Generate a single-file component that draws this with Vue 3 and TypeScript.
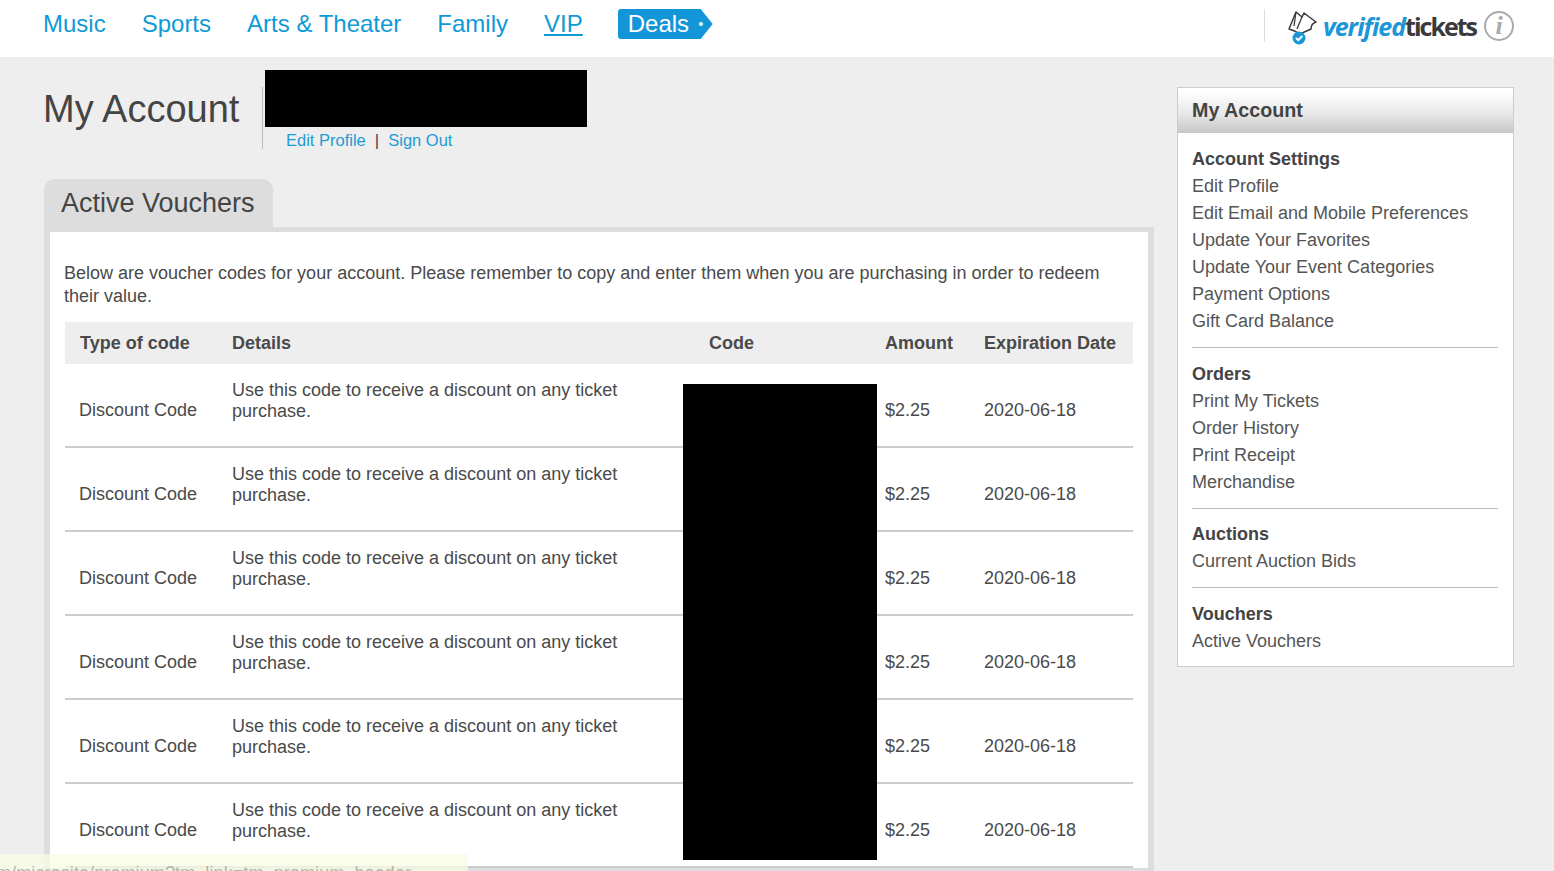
<script setup lang="ts">
const navItems = ['Music', 'Sports', 'Arts & Theater', 'Family']
const rows = Array.from({ length: 6 }, (_, i) => i)
const sections = [
  { title: 'Account Settings', links: ['Edit Profile', 'Edit Email and Mobile Preferences', 'Update Your Favorites', 'Update Your Event Categories', 'Payment Options', 'Gift Card Balance'] },
  { title: 'Orders', links: ['Print My Tickets', 'Order History', 'Print Receipt', 'Merchandise'] },
  { title: 'Auctions', links: ['Current Auction Bids'] },
  { title: 'Vouchers', links: ['Active Vouchers'] },
]
</script>

<template>
  <div class="page">
    <header class="topbar">
      <nav class="nav">
        <a v-for="item in navItems" :key="item" class="nav-link">{{ item }}</a>
        <a class="nav-link vip">VIP</a>
        <a class="deals">Deals<span class="deals-dot"></span></a>
      </nav>
      <div class="brand">
        <svg class="ticket" width="30" height="36" viewBox="0 0 30 36" fill="none">
          <path d="M2 19 L9 2 L15 7 L17 3 L29 12 C26 13 24 15 24 19 L13 24 C10 22 6 20 2 19 Z" stroke="#3a3a3a" stroke-width="1.5" stroke-linejoin="round" />
          <path d="M15 7 L10 19 M9 2 L7 16" stroke="#3a3a3a" stroke-width="1.3" />
          <circle cx="12" cy="28" r="6.5" fill="#1b96d6" />
          <path d="M9 28 L11.3 30.2 L15.3 26" stroke="#fff" stroke-width="1.9" />
        </svg>
        <span class="wordmark"><span class="verified">verified</span><span class="tickets">tickets</span></span>
        <span class="info">i</span>
      </div>
    </header>

    <main class="main">
      <section class="content">
        <div class="title-row">
          <h1 class="title">My Account</h1>
          <div class="user">
            <div class="user-redacted"></div>
            <div class="user-links">
              <a class="link">Edit Profile</a><span class="pipe">|</span><a class="link">Sign Out</a>
            </div>
          </div>
        </div>

        <h2 class="tab">Active Vouchers</h2>
        <div class="panel">
          <p class="intro">Below are voucher codes for your account. Please remember to copy and enter them when you are purchasing in order to redeem their value.</p>
          <div class="table">
            <div class="row head">
              <div class="cell first">Type of code</div>
              <div class="cell">Details</div>
              <div class="cell">Code</div>
              <div class="cell">Amount</div>
              <div class="cell">Expiration Date</div>
            </div>
            <div v-for="r in rows" :key="r" class="row body">
              <div class="cell">Discount Code</div>
              <div class="cell details">Use this code to receive a discount on any ticket purchase.</div>
              <div class="cell"></div>
              <div class="cell">$2.25</div>
              <div class="cell">2020-06-18</div>
            </div>
            <div class="code-redacted"></div>
          </div>
        </div>
      </section>

      <aside class="side">
        <h3 class="side-head">My Account</h3>
        <div class="side-body">
          <div v-for="s in sections" :key="s.title" class="side-section">
            <div class="side-title">{{ s.title }}</div>
            <a v-for="l in s.links" :key="l" class="side-link">{{ l }}</a>
          </div>
        </div>
      </aside>
    </main>

    <div class="status">m/microsite/premium?tm_link=tm_premium_header</div>
  </div>
</template>

<style>
html, body { margin: 0; background: #eee; }
</style>

<style scoped>
.page {
  position: relative;
  height: 871px;
  overflow: hidden;
  background: #eee;
  font-family: "Liberation Sans", Arial, sans-serif;
  color: #4a4a4a;
}
.topbar {
  height: 57px;
  background: #fff;
  display: flex;
  justify-content: space-between;
  padding: 0 40px 0 43px;
  box-sizing: border-box;
}
.nav {
  display: flex;
  align-items: flex-start;
  gap: 36px;
  padding-top: 9px;
}
.nav-link {
  font-size: 24px;
  line-height: 29px;
  color: #0f9ad6;
}
.vip { text-decoration: underline; }
.deals {
  position: relative;
  display: flex;
  align-items: center;
  height: 30px;
  width: 95px;
  margin-left: -1px;
  box-sizing: border-box;
  padding: 0 0 1px 10px;
  font-size: 24px;
  color: #fff;
  background: #1296d8;
  border-radius: 3px 0 0 3px;
  clip-path: polygon(0 0, 83px 0, 95px 50%, 83px 100%, 0 100%);
}
.deals-dot {
  position: absolute;
  left: 81px;
  top: 13px;
  width: 4px;
  height: 4px;
  border-radius: 50%;
  background: #fff;
}
.brand {
  display: flex;
  align-items: center;
  height: 33px;
  margin-top: 9px;
  border-left: 1px solid #ddd;
  padding-left: 22px;
}
.ticket { margin-top: 4px; flex: none; }
.wordmark {
  margin-left: 6px;
  font-family: "Open Sans", sans-serif;
  font-size: 25px;
  font-weight: 700;
  white-space: nowrap;
}
.verified { color: #1b96d6; font-style: italic; letter-spacing: -1px; }
.tickets { color: #3a3a3a; letter-spacing: -2px; }
.info {
  margin-left: 8px;
  width: 30px;
  height: 30px;
  box-sizing: border-box;
  border: 2px solid #aaa;
  border-radius: 50%;
  display: flex;
  align-items: center;
  justify-content: center;
  font-family: "Liberation Serif", serif;
  font-style: italic;
  font-weight: 700;
  font-size: 26px;
  color: #aaa;
}
.main {
  display: flex;
  align-items: flex-start;
  gap: 23px;
  padding-left: 44px;
}
.content { width: 1110px; flex: none; }
.title-row {
  display: flex;
  align-items: flex-start;
  height: 122px;
}
.title {
  margin: 30px 0 0 -1px;
  width: 219px;
  flex: none;
  font-size: 38px;
  line-height: 44px;
  font-weight: 400;
  color: #444;
}
.user {
  margin-top: 13px;
  position: relative;
  padding-left: 24px;
}
.user::before {
  content: "";
  position: absolute;
  left: 0;
  top: 17px;
  width: 1px;
  height: 62px;
  background: #bbb;
}
.user-redacted {
  width: 322px;
  height: 57px;
  margin-left: -21px;
  background: #000;
}
.user-links {
  display: flex;
  align-items: center;
  height: 27px;
  font-size: 16.5px;
}
.link { color: #1d9cd3; }
.pipe { margin: 0 9px; color: #444; font-size: 17px; }
.tab {
  margin: 0;
  width: 229px;
  height: 48px;
  box-sizing: border-box;
  padding-left: 17px;
  background: #ddd;
  border-radius: 11px 11px 0 0;
  font-size: 27px;
  line-height: 48px;
  font-weight: 400;
  color: #444;
}
.panel {
  border: 6px solid #ddd;
  border-top-width: 5px;
  background: #fff;
  padding: 30px 15px 0 14px;
}
.intro {
  margin: 0 0 14px;
  font-size: 18px;
  line-height: 23px;
}
.table {
  position: relative;
  margin-left: 1px;
  width: 1068px;
}
.row {
  display: grid;
  grid-template-columns: 153px 477px 176px 99px 163px;
  font-size: 18px;
}
.head {
  height: 42px;
  background: #eee;
  font-weight: 700;
  align-items: center;
}
.head .cell:first-child { padding-left: 15px; }
.body {
  height: 84px;
  box-sizing: border-box;
  border-bottom: 2px solid #ccc;
  align-items: start;
  line-height: 21px;
}
.cell { padding: 0 14px; }
.body .cell { padding-top: 36px; }
.body .details { padding: 16px 0 0 14px; width: 400px; }
.code-redacted {
  position: absolute;
  left: 618px;
  top: 62px;
  width: 194px;
  height: 476px;
  background: #000;
}
.side {
  width: 337px;
  flex: none;
  box-sizing: border-box;
  margin-top: 30px;
  border: 1px solid #ccc;
  background: #fff;
}
.side-head {
  margin: 0;
  height: 45px;
  padding-left: 14px;
  font-size: 19.7px;
  line-height: 44px;
  font-weight: 700;
  color: #444;
  background: linear-gradient(#fff 8%, #e6e6e6 60%, #c6c6c6);
}
.side-body { padding: 13px 15px 11px 14px; }
.side-section {
  display: flex;
  flex-direction: column;
  padding-bottom: 12px;
  margin-bottom: 12.6px;
  border-bottom: 1px solid #bbb;
}
.side-section:last-child { border-bottom: 0; padding-bottom: 0; margin-bottom: 0; }
.side-title { font-size: 18px; line-height: 27px; font-weight: 700; color: #444; }
.side-link { font-size: 18px; line-height: 27px; color: #555; }
.status {
  position: absolute;
  left: 0;
  bottom: 0;
  width: 468px;
  height: 17px;
  box-sizing: border-box;
  padding-top: 9px;
  overflow: hidden;
  white-space: nowrap;
  background: rgba(250, 252, 228, 0.75);
  font-size: 18px;
  line-height: 20px;
  letter-spacing: 0.1px;
  color: #b5b5a8;
  text-indent: -4px;
}
</style>
